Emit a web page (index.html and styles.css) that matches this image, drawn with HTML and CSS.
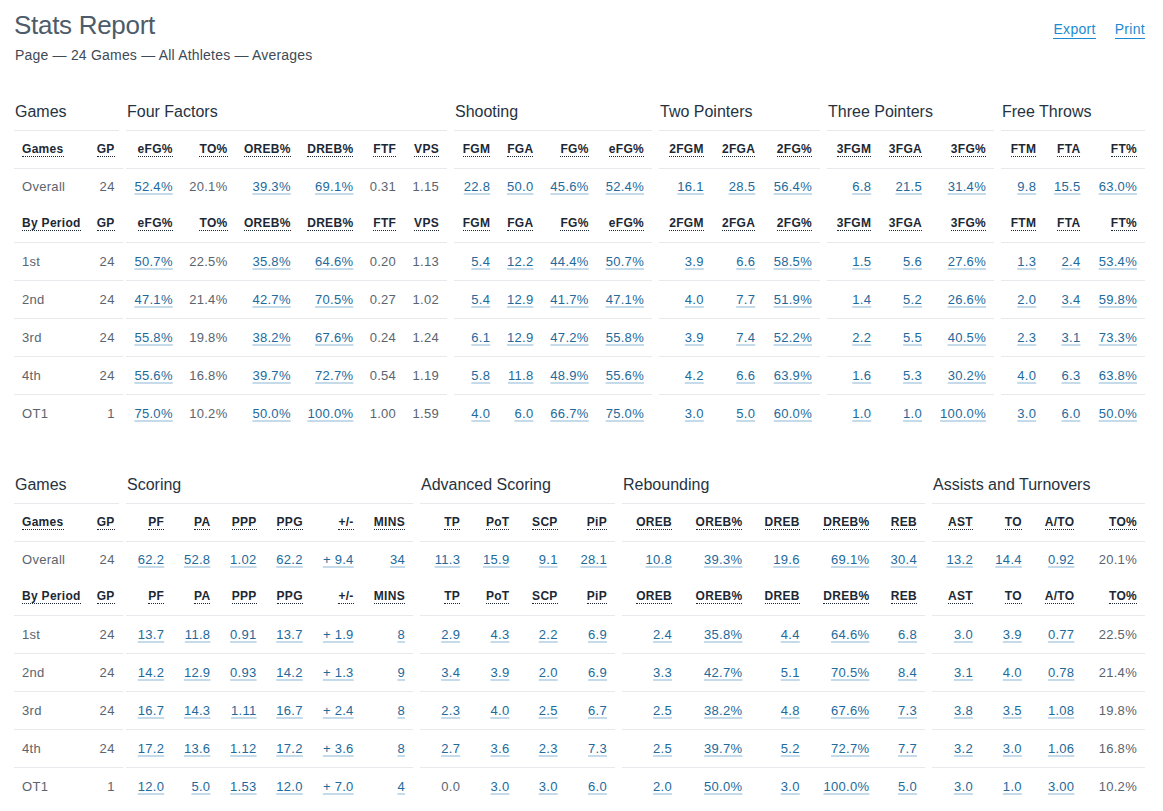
FILE: index.html
```html
<!DOCTYPE html>
<html lang="en">
<head>
<meta charset="utf-8">
<title>Stats Report</title>
<link rel="stylesheet" href="styles.css">
</head>
<body>
<div class="page">
  <header class="top">
    <div class="heading">
      <h1 class="title">Stats Report</h1>
      <p class="subtitle">Page — 24 Games — All Athletes — Averages</p>
    </div>
    <nav class="actions">
      <a class="action" href="#">Export</a>
      <a class="action" href="#">Print</a>
    </nav>
  </header>

  <section class="block">
    <div class="group w-games">
      <div class="group-title">Games</div>
      <table>
        <tr class="head"><th class="first"><span class="abbr">Games</span></th><th><span class="abbr">GP</span></th></tr>
        <tr class="overall"><td class="first">Overall</td><td>24</td></tr>
        <tr class="head"><th class="first"><span class="abbr">By Period</span></th><th><span class="abbr">GP</span></th></tr>
        <tr class="row"><td class="first">1st</td><td>24</td></tr>
        <tr class="row"><td class="first">2nd</td><td>24</td></tr>
        <tr class="row"><td class="first">3rd</td><td>24</td></tr>
        <tr class="row"><td class="first">4th</td><td>24</td></tr>
        <tr class="row"><td class="first">OT1</td><td>1</td></tr>
      </table>
    </div>

    <div class="group w-ff">
      <div class="group-title">Four Factors</div>
      <table>
        <tr class="head"><th><span class="abbr">eFG%</span></th><th><span class="abbr">TO%</span></th><th><span class="abbr">OREB%</span></th><th><span class="abbr">DREB%</span></th><th><span class="abbr">FTF</span></th><th><span class="abbr">VPS</span></th></tr>
        <tr class="overall"><td><a class="val" href="#">52.4%</a></td><td>20.1%</td><td><a class="val" href="#">39.3%</a></td><td><a class="val" href="#">69.1%</a></td><td>0.31</td><td>1.15</td></tr>
        <tr class="head"><th><span class="abbr">eFG%</span></th><th><span class="abbr">TO%</span></th><th><span class="abbr">OREB%</span></th><th><span class="abbr">DREB%</span></th><th><span class="abbr">FTF</span></th><th><span class="abbr">VPS</span></th></tr>
        <tr class="row"><td><a class="val" href="#">50.7%</a></td><td>22.5%</td><td><a class="val" href="#">35.8%</a></td><td><a class="val" href="#">64.6%</a></td><td>0.20</td><td>1.13</td></tr>
        <tr class="row"><td><a class="val" href="#">47.1%</a></td><td>21.4%</td><td><a class="val" href="#">42.7%</a></td><td><a class="val" href="#">70.5%</a></td><td>0.27</td><td>1.02</td></tr>
        <tr class="row"><td><a class="val" href="#">55.8%</a></td><td>19.8%</td><td><a class="val" href="#">38.2%</a></td><td><a class="val" href="#">67.6%</a></td><td>0.24</td><td>1.24</td></tr>
        <tr class="row"><td><a class="val" href="#">55.6%</a></td><td>16.8%</td><td><a class="val" href="#">39.7%</a></td><td><a class="val" href="#">72.7%</a></td><td>0.54</td><td>1.19</td></tr>
        <tr class="row"><td><a class="val" href="#">75.0%</a></td><td>10.2%</td><td><a class="val" href="#">50.0%</a></td><td><a class="val" href="#">100.0%</a></td><td>1.00</td><td>1.59</td></tr>
      </table>
    </div>

    <div class="group w-shoot">
      <div class="group-title">Shooting</div>
      <table>
        <tr class="head"><th><span class="abbr">FGM</span></th><th><span class="abbr">FGA</span></th><th><span class="abbr">FG%</span></th><th><span class="abbr">eFG%</span></th></tr>
        <tr class="overall"><td><a class="val" href="#">22.8</a></td><td><a class="val" href="#">50.0</a></td><td><a class="val" href="#">45.6%</a></td><td><a class="val" href="#">52.4%</a></td></tr>
        <tr class="head"><th><span class="abbr">FGM</span></th><th><span class="abbr">FGA</span></th><th><span class="abbr">FG%</span></th><th><span class="abbr">eFG%</span></th></tr>
        <tr class="row"><td><a class="val" href="#">5.4</a></td><td><a class="val" href="#">12.2</a></td><td><a class="val" href="#">44.4%</a></td><td><a class="val" href="#">50.7%</a></td></tr>
        <tr class="row"><td><a class="val" href="#">5.4</a></td><td><a class="val" href="#">12.9</a></td><td><a class="val" href="#">41.7%</a></td><td><a class="val" href="#">47.1%</a></td></tr>
        <tr class="row"><td><a class="val" href="#">6.1</a></td><td><a class="val" href="#">12.9</a></td><td><a class="val" href="#">47.2%</a></td><td><a class="val" href="#">55.8%</a></td></tr>
        <tr class="row"><td><a class="val" href="#">5.8</a></td><td><a class="val" href="#">11.8</a></td><td><a class="val" href="#">48.9%</a></td><td><a class="val" href="#">55.6%</a></td></tr>
        <tr class="row"><td><a class="val" href="#">4.0</a></td><td><a class="val" href="#">6.0</a></td><td><a class="val" href="#">66.7%</a></td><td><a class="val" href="#">75.0%</a></td></tr>
      </table>
    </div>

    <div class="group w-two">
      <div class="group-title">Two Pointers</div>
      <table>
        <tr class="head"><th><span class="abbr">2FGM</span></th><th><span class="abbr">2FGA</span></th><th><span class="abbr">2FG%</span></th></tr>
        <tr class="overall"><td><a class="val" href="#">16.1</a></td><td><a class="val" href="#">28.5</a></td><td><a class="val" href="#">56.4%</a></td></tr>
        <tr class="head"><th><span class="abbr">2FGM</span></th><th><span class="abbr">2FGA</span></th><th><span class="abbr">2FG%</span></th></tr>
        <tr class="row"><td><a class="val" href="#">3.9</a></td><td><a class="val" href="#">6.6</a></td><td><a class="val" href="#">58.5%</a></td></tr>
        <tr class="row"><td><a class="val" href="#">4.0</a></td><td><a class="val" href="#">7.7</a></td><td><a class="val" href="#">51.9%</a></td></tr>
        <tr class="row"><td><a class="val" href="#">3.9</a></td><td><a class="val" href="#">7.4</a></td><td><a class="val" href="#">52.2%</a></td></tr>
        <tr class="row"><td><a class="val" href="#">4.2</a></td><td><a class="val" href="#">6.6</a></td><td><a class="val" href="#">63.9%</a></td></tr>
        <tr class="row"><td><a class="val" href="#">3.0</a></td><td><a class="val" href="#">5.0</a></td><td><a class="val" href="#">60.0%</a></td></tr>
      </table>
    </div>

    <div class="group w-three">
      <div class="group-title">Three Pointers</div>
      <table>
        <tr class="head"><th><span class="abbr">3FGM</span></th><th><span class="abbr">3FGA</span></th><th><span class="abbr">3FG%</span></th></tr>
        <tr class="overall"><td><a class="val" href="#">6.8</a></td><td><a class="val" href="#">21.5</a></td><td><a class="val" href="#">31.4%</a></td></tr>
        <tr class="head"><th><span class="abbr">3FGM</span></th><th><span class="abbr">3FGA</span></th><th><span class="abbr">3FG%</span></th></tr>
        <tr class="row"><td><a class="val" href="#">1.5</a></td><td><a class="val" href="#">5.6</a></td><td><a class="val" href="#">27.6%</a></td></tr>
        <tr class="row"><td><a class="val" href="#">1.4</a></td><td><a class="val" href="#">5.2</a></td><td><a class="val" href="#">26.6%</a></td></tr>
        <tr class="row"><td><a class="val" href="#">2.2</a></td><td><a class="val" href="#">5.5</a></td><td><a class="val" href="#">40.5%</a></td></tr>
        <tr class="row"><td><a class="val" href="#">1.6</a></td><td><a class="val" href="#">5.3</a></td><td><a class="val" href="#">30.2%</a></td></tr>
        <tr class="row"><td><a class="val" href="#">1.0</a></td><td><a class="val" href="#">1.0</a></td><td><a class="val" href="#">100.0%</a></td></tr>
      </table>
    </div>

    <div class="group w-ft">
      <div class="group-title">Free Throws</div>
      <table>
        <tr class="head"><th><span class="abbr">FTM</span></th><th><span class="abbr">FTA</span></th><th><span class="abbr">FT%</span></th></tr>
        <tr class="overall"><td><a class="val" href="#">9.8</a></td><td><a class="val" href="#">15.5</a></td><td><a class="val" href="#">63.0%</a></td></tr>
        <tr class="head"><th><span class="abbr">FTM</span></th><th><span class="abbr">FTA</span></th><th><span class="abbr">FT%</span></th></tr>
        <tr class="row"><td><a class="val" href="#">1.3</a></td><td><a class="val" href="#">2.4</a></td><td><a class="val" href="#">53.4%</a></td></tr>
        <tr class="row"><td><a class="val" href="#">2.0</a></td><td><a class="val" href="#">3.4</a></td><td><a class="val" href="#">59.8%</a></td></tr>
        <tr class="row"><td><a class="val" href="#">2.3</a></td><td><a class="val" href="#">3.1</a></td><td><a class="val" href="#">73.3%</a></td></tr>
        <tr class="row"><td><a class="val" href="#">4.0</a></td><td><a class="val" href="#">6.3</a></td><td><a class="val" href="#">63.8%</a></td></tr>
        <tr class="row"><td><a class="val" href="#">3.0</a></td><td><a class="val" href="#">6.0</a></td><td><a class="val" href="#">50.0%</a></td></tr>
      </table>
    </div>
  </section>

  <section class="block">
    <div class="group w-games">
      <div class="group-title">Games</div>
      <table>
        <tr class="head"><th class="first"><span class="abbr">Games</span></th><th><span class="abbr">GP</span></th></tr>
        <tr class="overall"><td class="first">Overall</td><td>24</td></tr>
        <tr class="head"><th class="first"><span class="abbr">By Period</span></th><th><span class="abbr">GP</span></th></tr>
        <tr class="row"><td class="first">1st</td><td>24</td></tr>
        <tr class="row"><td class="first">2nd</td><td>24</td></tr>
        <tr class="row"><td class="first">3rd</td><td>24</td></tr>
        <tr class="row"><td class="first">4th</td><td>24</td></tr>
        <tr class="row"><td class="first">OT1</td><td>1</td></tr>
      </table>
    </div>

    <div class="group w-scoring">
      <div class="group-title">Scoring</div>
      <table>
        <tr class="head"><th><span class="abbr">PF</span></th><th><span class="abbr">PA</span></th><th><span class="abbr">PPP</span></th><th><span class="abbr">PPG</span></th><th><span class="abbr">+/-</span></th><th><span class="abbr">MINS</span></th></tr>
        <tr class="overall"><td><a class="val" href="#">62.2</a></td><td><a class="val" href="#">52.8</a></td><td><a class="val" href="#">1.02</a></td><td><a class="val" href="#">62.2</a></td><td><a class="val" href="#">+ 9.4</a></td><td><a class="val" href="#">34</a></td></tr>
        <tr class="head"><th><span class="abbr">PF</span></th><th><span class="abbr">PA</span></th><th><span class="abbr">PPP</span></th><th><span class="abbr">PPG</span></th><th><span class="abbr">+/-</span></th><th><span class="abbr">MINS</span></th></tr>
        <tr class="row"><td><a class="val" href="#">13.7</a></td><td><a class="val" href="#">11.8</a></td><td><a class="val" href="#">0.91</a></td><td><a class="val" href="#">13.7</a></td><td><a class="val" href="#">+ 1.9</a></td><td><a class="val" href="#">8</a></td></tr>
        <tr class="row"><td><a class="val" href="#">14.2</a></td><td><a class="val" href="#">12.9</a></td><td><a class="val" href="#">0.93</a></td><td><a class="val" href="#">14.2</a></td><td><a class="val" href="#">+ 1.3</a></td><td><a class="val" href="#">9</a></td></tr>
        <tr class="row"><td><a class="val" href="#">16.7</a></td><td><a class="val" href="#">14.3</a></td><td><a class="val" href="#">1.11</a></td><td><a class="val" href="#">16.7</a></td><td><a class="val" href="#">+ 2.4</a></td><td><a class="val" href="#">8</a></td></tr>
        <tr class="row"><td><a class="val" href="#">17.2</a></td><td><a class="val" href="#">13.6</a></td><td><a class="val" href="#">1.12</a></td><td><a class="val" href="#">17.2</a></td><td><a class="val" href="#">+ 3.6</a></td><td><a class="val" href="#">8</a></td></tr>
        <tr class="row"><td><a class="val" href="#">12.0</a></td><td><a class="val" href="#">5.0</a></td><td><a class="val" href="#">1.53</a></td><td><a class="val" href="#">12.0</a></td><td><a class="val" href="#">+ 7.0</a></td><td><a class="val" href="#">4</a></td></tr>
      </table>
    </div>

    <div class="group w-adv">
      <div class="group-title">Advanced Scoring</div>
      <table>
        <tr class="head"><th><span class="abbr">TP</span></th><th><span class="abbr">PoT</span></th><th><span class="abbr">SCP</span></th><th><span class="abbr">PiP</span></th></tr>
        <tr class="overall"><td><a class="val" href="#">11.3</a></td><td><a class="val" href="#">15.9</a></td><td><a class="val" href="#">9.1</a></td><td><a class="val" href="#">28.1</a></td></tr>
        <tr class="head"><th><span class="abbr">TP</span></th><th><span class="abbr">PoT</span></th><th><span class="abbr">SCP</span></th><th><span class="abbr">PiP</span></th></tr>
        <tr class="row"><td><a class="val" href="#">2.9</a></td><td><a class="val" href="#">4.3</a></td><td><a class="val" href="#">2.2</a></td><td><a class="val" href="#">6.9</a></td></tr>
        <tr class="row"><td><a class="val" href="#">3.4</a></td><td><a class="val" href="#">3.9</a></td><td><a class="val" href="#">2.0</a></td><td><a class="val" href="#">6.9</a></td></tr>
        <tr class="row"><td><a class="val" href="#">2.3</a></td><td><a class="val" href="#">4.0</a></td><td><a class="val" href="#">2.5</a></td><td><a class="val" href="#">6.7</a></td></tr>
        <tr class="row"><td><a class="val" href="#">2.7</a></td><td><a class="val" href="#">3.6</a></td><td><a class="val" href="#">2.3</a></td><td><a class="val" href="#">7.3</a></td></tr>
        <tr class="row"><td>0.0</td><td><a class="val" href="#">3.0</a></td><td><a class="val" href="#">3.0</a></td><td><a class="val" href="#">6.0</a></td></tr>
      </table>
    </div>

    <div class="group w-reb">
      <div class="group-title">Rebounding</div>
      <table>
        <tr class="head"><th><span class="abbr">OREB</span></th><th><span class="abbr">OREB%</span></th><th><span class="abbr">DREB</span></th><th><span class="abbr">DREB%</span></th><th><span class="abbr">REB</span></th></tr>
        <tr class="overall"><td><a class="val" href="#">10.8</a></td><td><a class="val" href="#">39.3%</a></td><td><a class="val" href="#">19.6</a></td><td><a class="val" href="#">69.1%</a></td><td><a class="val" href="#">30.4</a></td></tr>
        <tr class="head"><th><span class="abbr">OREB</span></th><th><span class="abbr">OREB%</span></th><th><span class="abbr">DREB</span></th><th><span class="abbr">DREB%</span></th><th><span class="abbr">REB</span></th></tr>
        <tr class="row"><td><a class="val" href="#">2.4</a></td><td><a class="val" href="#">35.8%</a></td><td><a class="val" href="#">4.4</a></td><td><a class="val" href="#">64.6%</a></td><td><a class="val" href="#">6.8</a></td></tr>
        <tr class="row"><td><a class="val" href="#">3.3</a></td><td><a class="val" href="#">42.7%</a></td><td><a class="val" href="#">5.1</a></td><td><a class="val" href="#">70.5%</a></td><td><a class="val" href="#">8.4</a></td></tr>
        <tr class="row"><td><a class="val" href="#">2.5</a></td><td><a class="val" href="#">38.2%</a></td><td><a class="val" href="#">4.8</a></td><td><a class="val" href="#">67.6%</a></td><td><a class="val" href="#">7.3</a></td></tr>
        <tr class="row"><td><a class="val" href="#">2.5</a></td><td><a class="val" href="#">39.7%</a></td><td><a class="val" href="#">5.2</a></td><td><a class="val" href="#">72.7%</a></td><td><a class="val" href="#">7.7</a></td></tr>
        <tr class="row"><td><a class="val" href="#">2.0</a></td><td><a class="val" href="#">50.0%</a></td><td><a class="val" href="#">3.0</a></td><td><a class="val" href="#">100.0%</a></td><td><a class="val" href="#">5.0</a></td></tr>
      </table>
    </div>

    <div class="group w-ast">
      <div class="group-title">Assists and Turnovers</div>
      <table>
        <tr class="head"><th><span class="abbr">AST</span></th><th><span class="abbr">TO</span></th><th><span class="abbr">A/TO</span></th><th><span class="abbr">TO%</span></th></tr>
        <tr class="overall"><td><a class="val" href="#">13.2</a></td><td><a class="val" href="#">14.4</a></td><td><a class="val" href="#">0.92</a></td><td>20.1%</td></tr>
        <tr class="head"><th><span class="abbr">AST</span></th><th><span class="abbr">TO</span></th><th><span class="abbr">A/TO</span></th><th><span class="abbr">TO%</span></th></tr>
        <tr class="row"><td><a class="val" href="#">3.0</a></td><td><a class="val" href="#">3.9</a></td><td><a class="val" href="#">0.77</a></td><td>22.5%</td></tr>
        <tr class="row"><td><a class="val" href="#">3.1</a></td><td><a class="val" href="#">4.0</a></td><td><a class="val" href="#">0.78</a></td><td>21.4%</td></tr>
        <tr class="row"><td><a class="val" href="#">3.8</a></td><td><a class="val" href="#">3.5</a></td><td><a class="val" href="#">1.08</a></td><td>19.8%</td></tr>
        <tr class="row"><td><a class="val" href="#">3.2</a></td><td><a class="val" href="#">3.0</a></td><td><a class="val" href="#">1.06</a></td><td>16.8%</td></tr>
        <tr class="row"><td><a class="val" href="#">3.0</a></td><td><a class="val" href="#">1.0</a></td><td><a class="val" href="#">3.00</a></td><td>10.2%</td></tr>
      </table>
    </div>
  </section>
</div>
</body>
</html>
```

FILE: styles.css
```css
* { box-sizing: border-box; }

html, body {
  margin: 0;
  padding: 0;
  background: #ffffff;
}

body {
  font-family: "Liberation Sans", Arial, Helvetica, sans-serif;
  color: #2b3a48;
}

.page {
  padding: 0 18px 0 14px;
}

.top {
  display: flex;
  justify-content: space-between;
  align-items: flex-start;
}

.title {
  margin: 10px 0 0 0;
  font-size: 26px;
  line-height: 30px;
  font-weight: normal;
  color: #4d5b6a;
  letter-spacing: -0.3px;
}

.subtitle {
  margin: 5px 0 0 1px;
  font-size: 14px;
  line-height: 20px;
  color: #3e4a56;
  letter-spacing: 0.2px;
}

.actions {
  display: flex;
  gap: 19px;
  margin-top: 20px;
}

.action {
  font-size: 14px;
  line-height: 18px;
  color: #1c8ad2;
  text-decoration: none;
  letter-spacing: 0.3px;
  border-bottom: 1px solid #1c8ad2;
}

.block {
  display: flex;
  gap: 7px;
  margin-top: 29px;
}

.block + .block {
  margin-top: 35px;
}

.group {
  flex: none;
}

.w-games { width: 105px; }
.w-ff { width: 321px; }
.w-shoot { width: 198px; }
.w-two { width: 161px; }
.w-three { width: 167px; }
.w-ft { width: 144px; }

.w-scoring { width: 287px; }
.w-adv { width: 195px; }
.w-reb { width: 303px; }
.w-ast { width: 213px; }

.group-title {
  font-size: 16px;
  line-height: 36px;
  height: 37px;
  padding-left: 1px;
  color: #26333f;
  border-bottom: 1px solid #e7e9ed;
  white-space: nowrap;
}

table {
  width: 100%;
  border-collapse: collapse;
  border-spacing: 0;
}

th, td {
  padding: 0 8px;
  text-align: right;
  white-space: nowrap;
}

th.first, td.first {
  text-align: left;
}

th {
  font-size: 12px;
  font-weight: bold;
  color: #1c2835;
  letter-spacing: 0.3px;
  height: 37px;
  border-bottom: 1px solid #e7e9ed;
}

td {
  font-size: 13px;
  color: #5a646f;
  letter-spacing: 0.3px;
  height: 38px;
  border-bottom: 1px solid #e7e9ed;
}

tr.overall td {
  height: 37px;
  border-bottom: none;
}

tr.row:last-child td {
  border-bottom: none;
}

.abbr {
  border-bottom: 1px dotted #1c2835;
}

.val {
  color: #226a9c;
  text-decoration: underline;
  text-decoration-color: #c6dbea;
  text-decoration-thickness: 2px;
  text-underline-offset: 2px;
}
```
